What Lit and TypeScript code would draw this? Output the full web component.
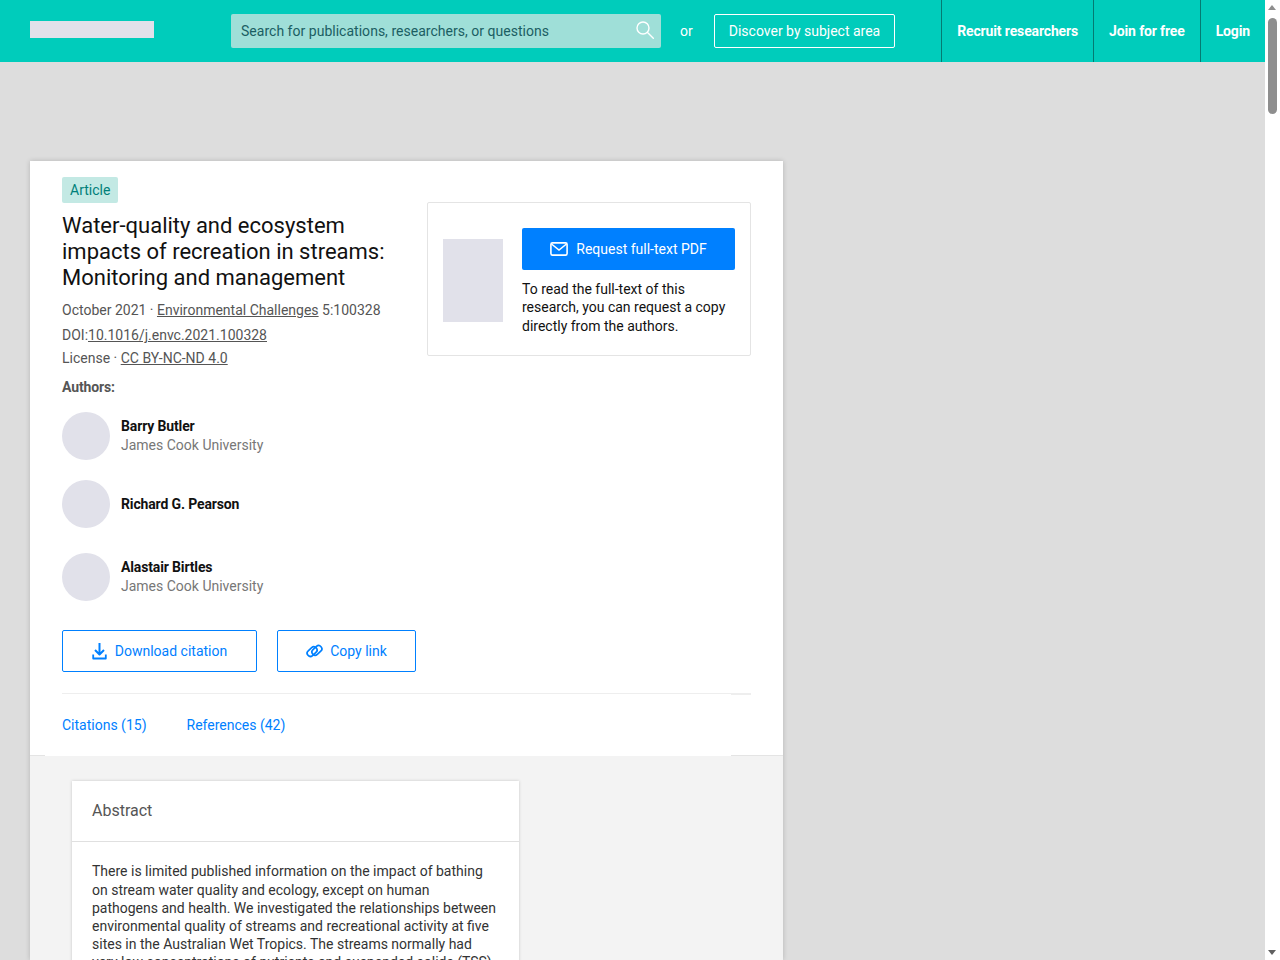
import { LitElement, html, css } from "lit";
import { customElement } from "lit/decorators.js";

const authors = [
  { name: "Barry Butler", aff: "James Cook University", cls: "a1" },
  { name: "Richard G. Pearson", aff: "", cls: "a2" },
  { name: "Alastair Birtles", aff: "James Cook University", cls: "a3" },
];

@customElement("app-root")
export class AppRoot extends LitElement {
  static styles = css`
    :host { display: flex; width: 1280px; height: 960px; overflow: hidden; background: #ddd; font-family: Roboto, "Liberation Sans", sans-serif; font-size: 14px; color: #111; }
    * { box-sizing: border-box; }
    .page { width: 1265px; flex: none; }
    a { color: inherit; }
    header { height: 62px; background: #00ccbb; display: flex; align-items: stretch; color: #fff; }
    .logo { width: 124px; height: 17px; background: #e1e1ea; margin: 21px 0 0 30px; flex: none; }
    .search { width: 430px; height: 34px; margin: 14px 0 0 77px; background: #9fdfd8; border-radius: 2px; display: flex; align-items: center; justify-content: space-between; padding: 0 7px 0 10px; color: #1b5e63; font-size: 14px; letter-spacing: 0.02px; flex: none; }
    .search svg { display: block; margin-top: -3px; }
    .or { margin: 14px 0 0 19px; line-height: 34px; width: 34px; flex: none; text-align: left; }
    .discover { width: 181px; height: 34px; margin-top: 14px; border: 1px solid #fff; border-radius: 2px; line-height: 32px; text-align: center; flex: none; }
    .nav { margin-left: auto; display: flex; }
    .nav a { border-left: 1px solid #047a72; display: flex; align-items: center; font-weight: 700; text-decoration: none; padding: 0 15px; letter-spacing: -0.14px; }
    .gap { height: 99px; }
    .card { width: 753px; margin-left: 30px; background: #fff; box-shadow: 0 0 5px rgba(0,0,0,.18); height: 799px; display: flex; flex-direction: column; }
    .top { padding: 16px 32px 0; }
    .split { display: flex; justify-content: space-between; }
    .left { width: 354px; }
    .tag { display: inline-block; height: 26px; line-height: 26px; padding: 0 8px; background: #c3e9e4; color: #00807a; border-radius: 2px; font-size: 14px; }
    h1 { margin: 10px 0 0; font-weight: 400; font-size: 22px; line-height: 26px; color: #111; }
    .meta { color: #555; line-height: 20px; }
    .m1 { margin-top: 9px; } .m2 { margin-top: 5px; } .m3 { margin-top: 3px; }
    .meta a { color: #555; }
    .authors-h { margin-top: 9px; color: #555; font-weight: 700; letter-spacing: -0.14px; line-height: 20px; }
    .author { display: flex; align-items: center; gap: 11px; height: 48px; }
    .a1 { margin-top: 15px; } .a2 { margin-top: 20px; } .a3 { margin-top: 25px; }
    .avatar { width: 48px; height: 48px; border-radius: 50%; background: #e1e1ea; flex: none; }
    .name { font-weight: 700; letter-spacing: -0.14px; line-height: 19px; color: #111; }
    .aff { color: #777; line-height: 19px; }
    .box { width: 324px; height: 154px; margin-top: 25px; border: 1px solid #e4e4e4; border-radius: 2px; padding: 25px 15px 0; display: flex; gap: 19px; }
    .thumb { width: 60px; height: 83px; margin-top: 11px; background: #e1e1ea; flex: none; }
    .req { width: 213px; height: 42px; background: #0080ff; color: #fff; border-radius: 2px; display: flex; align-items: center; justify-content: center; gap: 8px; }
    .box p { margin: 10px 0 0; line-height: 18.4px; color: #111; }
    .actions { display: flex; gap: 20px; margin-top: 29px; }
    .btn { height: 42px; border: 1px solid #0080ff; border-radius: 2px; color: #0080ff; display: flex; align-items: center; justify-content: center; gap: 8px; }
    .b1 { width: 195px; } .b2 { width: 139px; gap: 7px; }
    .rule { height: 2px; margin-top: 21px; display: flex; }
    .rule span:first-child { width: 669px; height: 1px; background: #eee; }
    .rule span:last-child { flex: 1; background: #eee; }
    .tabs { height: 60px; display: flex; align-items: center; gap: 40px; color: #0080ff; }
    .edge { height: 1px; display: grid; grid-template-columns: 15px 1fr 52px; background: #fff; }
    .edge i { background: #e4e4e4; }
    .lower { flex: 1; background: #f3f3f3; padding: 25px 0 0 42px; overflow: hidden; }
    .abstract { width: 447px; background: #fff; box-shadow: 0 0 3px rgba(0,0,0,.18); }
    .abstract h2 { margin: 0; height: 61px; padding-left: 20px; font-weight: 400; font-size: 16px; line-height: 60px; color: #555; border-bottom: 1px solid #e0e0e0; }
    .abstract p { margin: 0; padding: 20.4px 22px 0 20px; line-height: 18.2px; color: #333; }
    .scroll { width: 15px; flex: none; background: #fff; display: flex; flex-direction: column; align-items: center; position: relative; }
    .thumb-s { width: 9px; height: 96px; margin-top: 18px; border-radius: 5px; background: #8e8e8e; }
    .up, .down { position: absolute; left: 3px; width: 0; height: 0; border-left: 4.5px solid transparent; border-right: 4.5px solid transparent; }
    .up { top: 5px; border-bottom: 5px solid #8e8e8e; }
    .down { bottom: 5px; border-top: 5px solid #606060; }
  `;

  render() {
    return html`
      <div class="page">
        <header>
          <div class="logo"></div>
          <div class="search">
            <span>Search for publications, researchers, or questions</span>
            <svg width="18" height="18" viewBox="0 0 18 18" fill="none" stroke="#fff" stroke-width="1.4"><circle cx="7" cy="7" r="6"/><path d="M11.500 11.500l5.800 5.800" stroke-linecap="round"/></svg>
          </div>
          <div class="or">or</div>
          <div class="discover">Discover by subject area</div>
          <nav class="nav">
            <a href="#">Recruit researchers</a>
            <a href="#">Join for free</a>
            <a href="#">Login</a>
          </nav>
        </header>
        <div class="gap"></div>
        <section class="card">
          <div class="top">
            <div class="split">
              <div class="left">
                <span class="tag">Article</span>
                <h1>Water-quality and ecosystem impacts of recreation in streams: Monitoring and management</h1>
                <div class="meta m1">October 2021 · <a href="#">Environmental Challenges</a> 5:100328</div>
                <div class="meta m2">DOI:<a href="#">10.1016/j.envc.2021.100328</a></div>
                <div class="meta m3">License · <a href="#">CC BY-NC-ND 4.0</a></div>
                <div class="authors-h">Authors:</div>
                ${authors.map(a => html`
                  <div class="author ${a.cls}">
                    <div class="avatar"></div>
                    <div>
                      <div class="name">${a.name}</div>
                      ${a.aff ? html`<div class="aff">${a.aff}</div>` : ""}
                    </div>
                  </div>`)}
              </div>
              <aside class="box">
                <div class="thumb"></div>
                <div>
                  <div class="req">
                    <svg width="18" height="14" viewBox="0 0 18 14" fill="none" stroke="#fff" stroke-width="1.6"><rect x=".9" y=".9" width="16.2" height="12.2" rx="1.5"/><path d="M1.500 2l7.500 6 7.500-6"/></svg>
                    <span>Request full-text PDF</span>
                  </div>
                  <p>To read the full-text of this research, you can request a copy directly from the authors.</p>
                </div>
              </aside>
            </div>
            <div class="actions">
              <div class="btn b1">
                <svg width="15" height="17" viewBox="0 0 15 17" fill="none" stroke="#0080ff" stroke-width="2" stroke-linejoin="round"><path d="M7.500 0v11M3 7l4.500 4.500L12 7"/><path d="M1.200 11.500v4h12.600v-4" stroke-width="1.800"/></svg>
                <span>Download citation</span>
              </div>
              <div class="btn b2">
                <svg width="17" height="14" viewBox="0 0 17 14" fill="none" stroke="#0080ff" stroke-width="1.700"><rect x="0.600" y="4.400" width="11" height="6.400" rx="3.200" transform="rotate(-42 6.100 7.600)"/><rect x="5.400" y="3.200" width="11" height="6.400" rx="3.200" transform="rotate(-42 10.900 6.400)"/></svg>
                <span>Copy link</span>
              </div>
            </div>
            <div class="rule"><span></span><span></span></div>
            <div class="tabs"><span>Citations (15)</span><span>References (42)</span></div>
          </div>
          <div class="edge"><i></i><span></span><i></i></div>
          <div class="lower">
            <article class="abstract">
              <h2>Abstract</h2>
              <p>There is limited published information on the impact of bathing on stream water quality and ecology, except on human pathogens and health. We investigated the relationships between environmental quality of streams and recreational activity at five sites in the Australian Wet Tropics. The streams normally had very low concentrations of nutrients and suspended solids (TSS)</p>
            </article>
          </div>
        </section>
      </div>
      <div class="scroll"><span class="up"></span><div class="thumb-s"></div><span class="down"></span></div>
    `;
  }
}
